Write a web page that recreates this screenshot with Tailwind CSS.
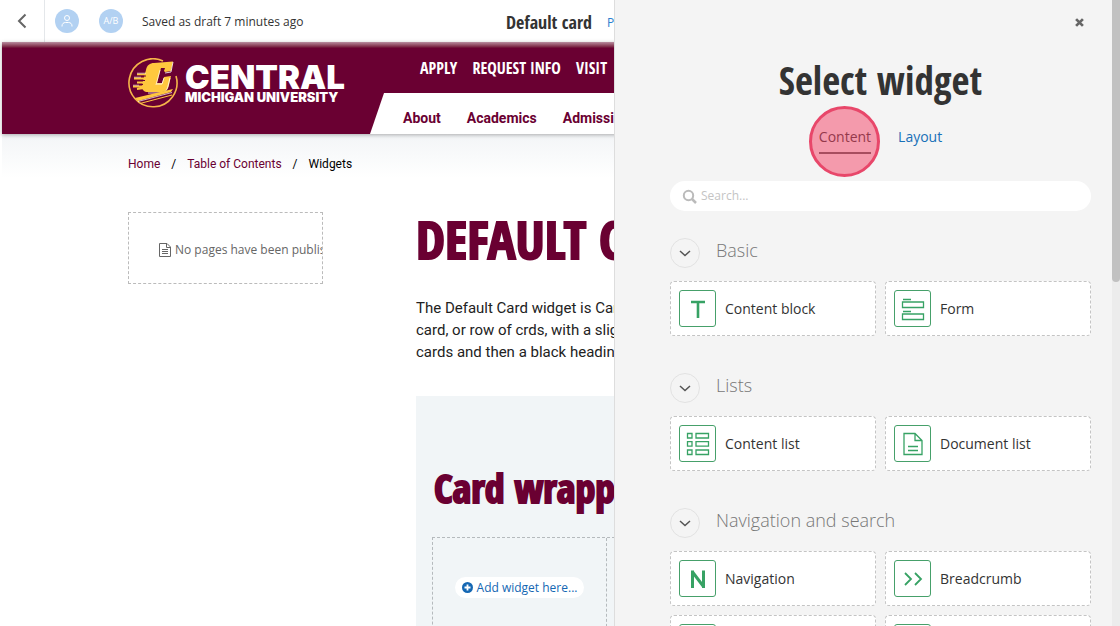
<!DOCTYPE html>
<html lang="en">
  <head>
    <meta charset="UTF-8">
    <meta name="viewport" content="width=device-width, initial-scale=1.0">
    <title>Default card - Select widget</title>
    <script src="https://cdn.jsdelivr.net/npm/@tailwindcss/browser@4"></script>
  </head>
  <body class="flex h-screen overflow-hidden bg-white font-['Open_Sans',sans-serif] text-[#333]">
    <!-- Page editor -->
    <div class="min-w-0 flex-1 overflow-hidden">
      <div class="flex h-[42px] items-center whitespace-nowrap">
        <button class="flex h-full w-11 shrink-0 items-center justify-center" aria-label="Back">
          <svg class="h-4 w-4" viewBox="0 0 16 16" fill="none" stroke="#666" stroke-width="2"><path d="M11.5 1.500 5 8l6.500 6.500"/></svg>
        </button>
        <div class="flex h-full shrink-0 items-center border-l border-[#e4e7ea] pl-[10px]">
          <button class="flex h-6 w-6 shrink-0 items-center justify-center rounded-full bg-[#b2d1f2]" aria-label="Persona">
            <svg class="h-[14px] w-[14px]" viewBox="0 0 14 14" fill="none" stroke="#fff" stroke-width="1"><circle cx="7" cy="4" r="2.500"/><path d="M2 12.500V12c0-2.200 1.500-3.500 3.500-3.500h3c2 0 3.500 1.300 3.500 3.500v.5"/></svg>
          </button>
          <button class="ml-5 flex h-6 w-6 shrink-0 items-center justify-center rounded-full bg-[#b2d1f2] text-[9px] text-white">A/B</button>
          <span class="ml-[19px] w-[161px] pt-[2px] text-xs">Saved as draft 7 minutes ago</span>
          <h2 class="ml-[203px] pt-[2px] font-['Open_Sans_Condensed','Liberation_Sans_Narrow',sans-serif] text-lg font-bold">Default card</h2>
          <a href="#" class="ml-[15px] pt-1 text-xs text-[#2b7fd0]">Page</a>
        </div>
      </div>
      <div class="ml-[2px]">
        <header class="relative z-10 flex h-[92px] w-[1000px] bg-[#6a0032] bg-linear-to-b from-[#b78da0] to-[#6a0032] to-[6px] shadow-[0_1px_4px_rgba(0,0,0,0.3)]">
          <a href="#" class="ml-[126px] mt-4 flex h-[50px] w-[242px] items-start gap-[7px] text-white" aria-label="Central Michigan University">
            <svg class="h-[50px] w-[50px] shrink-0" viewBox="0 0 50 50" fill="none">
              <path d="M35 3A24 24 0 1 0 48 18" stroke="#f5b54a" stroke-width="1.600"/>
              <path d="M45 3.500 43 13l-6 1-1-1 1-3h-4l-4 15h5l2-6 7-1-2 9c-1 5-4 7-8 7H20c-4 0-6-2-6-6l1-5 3-11c1-5 4-7 8-7z" fill="#ffc83e"/>
              <path d="m45 4-2 10-6 1M29 26h5l2-6M42 20l-2 8c-1 5-4 7-8 7H20" stroke="#fff" stroke-width=".8"/>
              <path d="m32 12-4 15" stroke="#fff" stroke-width=".7"/>
              <path d="M9 16.500h11M6 20.500h13M9 24.500h9M5 28.500h11M9 31l7-1" stroke="#ffc83e" stroke-width="1.800"/>
              <path d="M7 18h11M9 22.500h8M7 26.500h8" stroke="#6a0032" stroke-width="1"/>
              <path d="M9 15.200h9M6 19.200h7M5 27.200h6" stroke="#fff" stroke-width=".6"/>
              <path d="m7 40 38-9-2 3-33 9z" fill="#ffc83e"/>
              <path d="m10 43.500 34-9" stroke="#fff" stroke-width=".7"/>
              <path d="m12 45.500 32-8.500" stroke="#ffc83e" stroke-width="1"/>
            </svg>
            <span class="flex flex-col font-['Inter',sans-serif] whitespace-nowrap">
              <span class="mt-[7px] text-[33px] leading-6 font-black">CENTRAL</span>
              <span class="text-[13px] leading-4 font-black">MICHIGAN UNIVERSITY</span>
            </span>
          </a>
          <div class="flex flex-1 flex-col justify-between whitespace-nowrap">
            <nav class="flex gap-[15px] pt-4 pl-[50px] font-['Open_Sans_Condensed','Liberation_Sans_Narrow',sans-serif] text-base leading-5 font-bold text-white" aria-label="Quick links">
              <a href="#">APPLY</a>
              <a href="#">REQUEST INFO</a>
              <a href="#">VISIT</a>
            </nav>
            <div class="flex h-[41px]">
              <svg class="h-full w-[14px]" viewBox="0 0 14 41"><path d="M0 41 14 0v41z" fill="#fff"/></svg>
              <nav class="flex flex-1 items-center gap-[26px] bg-white pt-2 pl-[19px] font-['Roboto',sans-serif] text-sm font-bold text-[#6a0032]" aria-label="Main">
                <a href="#">About</a>
                <a href="#">Academics</a>
                <a href="#">Admissions</a>
              </nav>
            </div>
          </div>
        </header>
        <nav class="flex h-11 items-center gap-[11px] bg-linear-to-b from-[#f3f5f7] to-white pt-4 pl-[126px] font-['Roboto',sans-serif] text-xs whitespace-nowrap text-black" aria-label="Breadcrumb">
          <a href="#" class="text-[#6a0032]">Home</a>
          <span>/</span>
          <a href="#" class="text-[#6a0032]">Table of Contents</a>
          <span>/</span>
          <span>Widgets</span>
        </nav>
        <div class="flex w-[1000px] items-start pt-[34px] pl-[126px]">
          <div class="flex h-[72px] w-[195px] shrink-0 items-center gap-1 overflow-hidden border border-dashed border-[#bbb] px-[30px] pt-1 text-xs whitespace-nowrap text-[#666]">
            <svg class="h-[14px] w-3 shrink-0" viewBox="0 0 12 14" fill="none" stroke="#666" stroke-width="1"><path d="M.5.5h7.500l3.500 3.500v9.500H.5zM7.500.5v4h4M3 6.500h6M3 8.500h6M3 10.500h6"/></svg>
            No pages have been published
          </div>
          <main class="ml-[93px] w-[700px] shrink-0 whitespace-nowrap">
            <h1 class="font-['Open_Sans_Condensed','Liberation_Sans_Narrow',sans-serif] text-[52px] leading-[54px] font-extrabold text-[#6a0032] [-webkit-text-stroke:2px_#6a0032]">DEFAULT CARD</h1>
            <p class="mt-[31px] font-['Roboto',sans-serif] text-[15px] leading-[22px] text-[#222]">
              The Default Card widget is Card wrapper<br>
              card, or row of crds, with a slightly gray<br>
              cards and then a black heading
            </p>
            <section class="mt-[33px] h-[400px] bg-[#f1f5f7] px-4 pt-16">
              <h2 class="pl-[2px] font-['Open_Sans_Condensed','Liberation_Sans_Narrow',sans-serif] text-[40px] leading-[56px] font-extrabold text-[#6a0032] [-webkit-text-stroke:2px_#6a0032]">Card wrapper</h2>
              <div class="mt-[21px] grid h-48 grid-cols-[174px_174px] border border-dashed border-[#b5babd]">
                <div class="flex items-start justify-center border-r border-dashed border-[#b5babd] pt-[39px]">
                  <button class="flex h-[21px] items-center gap-1 rounded-full bg-white px-[7px] text-xs text-[#1467b3]">
                    <svg class="h-[11px] w-[11px]" viewBox="0 0 11 11"><circle cx="5.500" cy="5.500" r="5.500" fill="#1467b3"/><path d="M5.500 2.500v6M2.500 5.500h6" stroke="#fff" stroke-width="1.800"/></svg>
                    Add widget here...
                  </button>
                </div>
              </div>
            </section>
          </main>
        </div>
      </div>
    </div>
    <!-- Widget selector -->
    <aside class="flex w-[506px] shrink-0 overflow-hidden border-l border-[#ddd] bg-[#f4f4f4]">
      <div class="min-w-0 flex-1 pr-[21px] pl-[55px]">
        <div class="flex h-11 items-center justify-end pr-[7px]">
          <button aria-label="Close">
            <svg class="h-[9px] w-[9px]" viewBox="0 0 10 10" stroke="#666" stroke-width="3"><path d="m1.200 1.200 7.600 7.600m0-7.600L1.200 8.800"/></svg>
          </button>
        </div>
        <h1 class="mt-2 text-center font-['Open_Sans_Condensed','Liberation_Sans_Narrow',sans-serif] text-[39px] leading-[56px] font-bold">Select widget</h1>
        <div class="mt-[15px] flex justify-center gap-[27px] text-sm leading-7">
          <div class="relative">
            <button class="h-[31px] border-b-2 border-[#333]/80 pb-[2px]">Content</button>
            <span class="pointer-events-none absolute -top-[17px] -left-[10px] h-[71px] w-[71px] rounded-full border-3 border-[#e8476a] bg-[#f43f63]/50"></span>
          </div>
          <button class="h-[31px] pb-1 text-[#1870b8]">Layout</button>
        </div>
        <label class="mt-[27px] flex h-[30px] items-center gap-1 rounded-full bg-white px-3">
          <svg class="h-[15px] w-[15px]" viewBox="0 0 15 15" fill="none" stroke="#bbb" stroke-width="2"><circle cx="6.500" cy="6.500" r="4.700"/><path d="m10 10 4 4" stroke-width="2.500"/></svg>
          <input type="text" placeholder="Search..." aria-label="Search widgets" class="min-w-0 flex-1 text-xs outline-none placeholder:text-[#c4c4c4]">
        </label>
        <section class="mt-[27px]">
          <div class="flex h-[30px] items-center gap-4">
            <button class="flex h-[30px] w-[30px] items-center justify-center rounded-full border border-[#e2e2e2]" aria-label="Collapse Basic">
              <svg class="h-3 w-3" viewBox="0 0 12 12" fill="none" stroke="#555" stroke-width="1.500"><path d="m1 4 5 4.500L11 4"/></svg>
            </button>
            <h2 class="pb-[6px] text-lg font-light text-[#777]">Basic</h2>
          </div>
          <div class="mt-[13px] grid grid-cols-2 gap-[9px] text-sm">
            <button class="flex h-[55px] items-center gap-[9px] rounded border border-dashed border-[#c4c4c4] bg-white px-2">
              <span class="flex h-[37px] w-[37px] items-center justify-center rounded-[3px] border border-[#46a06a] text-[#37a264]">
                <svg class="h-6 w-6" viewBox="0 0 24 24" fill="none" stroke="currentColor"><path d="M5 5h14M12 5v16" stroke-width="2.600"/></svg>
              </span>
              Content block
            </button>
            <button class="flex h-[55px] items-center gap-[9px] rounded border border-dashed border-[#c4c4c4] bg-white px-2">
              <span class="flex h-[37px] w-[37px] items-center justify-center rounded-[3px] border border-[#46a06a] text-[#37a264]">
                <svg class="h-6 w-6" viewBox="0 0 24 24" fill="none" stroke="currentColor" stroke-width="1.300"><path d="M2 2.500h8M1.500 5h21v5.500h-21zM2 14.500h8M1.500 17h21v5.500h-21z"/></svg>
              </span>
              Form
            </button>
          </div>
        </section>
        <section class="mt-[37px]">
          <div class="flex h-[30px] items-center gap-4">
            <button class="flex h-[30px] w-[30px] items-center justify-center rounded-full border border-[#e2e2e2]" aria-label="Collapse Lists">
              <svg class="h-3 w-3" viewBox="0 0 12 12" fill="none" stroke="#555" stroke-width="1.500"><path d="m1 4 5 4.500L11 4"/></svg>
            </button>
            <h2 class="pb-[6px] text-lg font-light text-[#777]">Lists</h2>
          </div>
          <div class="mt-[13px] grid grid-cols-2 gap-[9px] text-sm">
            <button class="flex h-[55px] items-center gap-[9px] rounded border border-dashed border-[#c4c4c4] bg-white px-2">
              <span class="flex h-[37px] w-[37px] items-center justify-center rounded-[3px] border border-[#46a06a] text-[#37a264]">
                <svg class="h-6 w-6" viewBox="0 0 24 24" fill="none" stroke="currentColor" stroke-width="1.300"><path d="M1.500 1.500h4.500V6H1.500zM10 1.500h12.500V6H10zM1.500 9.700h4.500v4.500H1.500zM10 9.700h12.500v4.500H10zM1.500 18h4.500v4.500H1.500zM10 18h12.500v4.500H10z"/></svg>
              </span>
              Content list
            </button>
            <button class="flex h-[55px] items-center gap-[9px] rounded border border-dashed border-[#c4c4c4] bg-white px-2">
              <span class="flex h-[37px] w-[37px] items-center justify-center rounded-[3px] border border-[#46a06a] text-[#37a264]">
                <svg class="h-6 w-6" viewBox="0 0 24 24" fill="none" stroke="currentColor" stroke-width="1.300"><path d="M3 1.500h11l7 7v14H3zM14 1.500v7h7M7 14.500h10M7 18.500h10"/></svg>
              </span>
              Document list
            </button>
          </div>
        </section>
        <section class="mt-[37px]">
          <div class="flex h-[30px] items-center gap-4">
            <button class="flex h-[30px] w-[30px] items-center justify-center rounded-full border border-[#e2e2e2]" aria-label="Collapse Navigation and search">
              <svg class="h-3 w-3" viewBox="0 0 12 12" fill="none" stroke="#555" stroke-width="1.500"><path d="m1 4 5 4.500L11 4"/></svg>
            </button>
            <h2 class="pb-[6px] text-lg font-light text-[#777]">Navigation and search</h2>
          </div>
          <div class="mt-[13px] grid grid-cols-2 gap-[9px] text-sm">
            <button class="flex h-[55px] items-center gap-[9px] rounded border border-dashed border-[#c4c4c4] bg-white px-2">
              <span class="flex h-[37px] w-[37px] items-center justify-center rounded-[3px] border border-[#46a06a] text-[#37a264]">
                <svg class="h-6 w-6" viewBox="0 0 24 24" fill="none" stroke="currentColor" stroke-width="3"><path d="M6.500 21V3.500M17.500 21V3.500M6.500 5l11 14.500"/></svg>
              </span>
              Navigation
            </button>
            <button class="flex h-[55px] items-center gap-[9px] rounded border border-dashed border-[#c4c4c4] bg-white px-2">
              <span class="flex h-[37px] w-[37px] items-center justify-center rounded-[3px] border border-[#46a06a] text-[#37a264]">
                <svg class="h-6 w-6" viewBox="0 0 24 24" fill="none" stroke="currentColor" stroke-width="1.800"><path d="m4 6 6 6-6 6M14 6l6 6-6 6"/></svg>
              </span>
              Breadcrumb
            </button>
            <button class="flex h-[55px] items-center rounded border border-dashed border-[#c4c4c4] bg-white px-2" aria-label="Search box">
              <span class="h-[37px] w-[37px] rounded-[3px] border border-[#46a06a]"></span>
            </button>
            <button class="flex h-[55px] items-center rounded border border-dashed border-[#c4c4c4] bg-white px-2" aria-label="Search results">
              <span class="h-[37px] w-[37px] rounded-[3px] border border-[#46a06a]"></span>
            </button>
          </div>
        </section>
      </div>
      <div class="w-2 shrink-0 bg-[#ececec]">
        <div class="h-[282px] rounded-b-sm bg-[#c1c1c1]"></div>
      </div>
    </aside>
  </body>
</html>
